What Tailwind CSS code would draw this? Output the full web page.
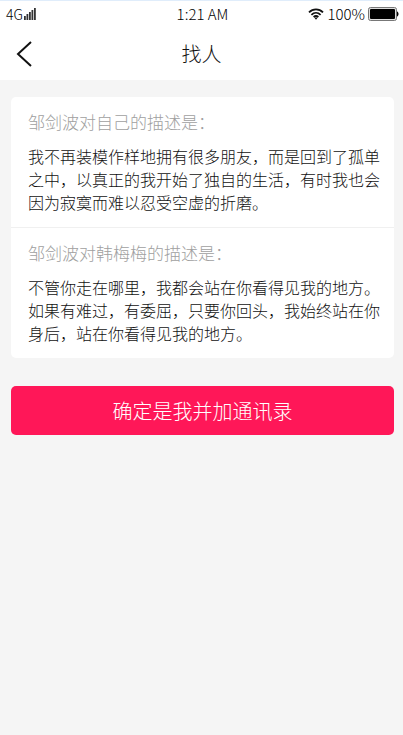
<!DOCTYPE html>
<html lang="zh-CN">
<head>
<meta charset="utf-8">
<meta name="viewport" content="width=device-width, initial-scale=1">
<title>找人</title>
<script src="https://cdn.jsdelivr.net/npm/@tailwindcss/browser@4"></script>
</head>
<body class="min-h-screen bg-[#f5f5f5] font-['Noto_Sans_CJK_SC',sans-serif] font-light text-[#111]">
<header class="border-t border-[#e0edfb] bg-white">
  <div class="grid h-[26px] grid-cols-3 items-center pr-1 pl-[6px] text-[15px] leading-6 text-black">
    <div class="flex items-center gap-px">
      <span class="text-sm">4G</span>
      <svg class="h-3 w-3" viewBox="0 0 12 12" fill="#333" aria-hidden="true"><path d="M0 8h1.8v4H0zM2.5 6h1.8v6H2.500zM5 4h1.800v8H5zM7.500 2h1.800v10H7.500zM10 0h1.800v12H10z"/></svg>
    </div>
    <time class="text-center">1:21 AM</time>
    <div class="flex items-center justify-end gap-[3px]">
      <svg class="h-3 w-4 shrink-0" viewBox="0 0 16 12" fill="none" stroke="#111" stroke-width="1.8" aria-hidden="true"><path d="M1 4.3C5 .3 11 .3 15 4.3M3.4 6.8c2.700-2.500 6.500-2.500 9.200 0M5.600 9c1.500-1.300 3.300-1.300 4.800 0"/><path d="M6.2 9.600h3.600L8 11.800z" fill="#111" stroke="none"/></svg>
      <span>100%</span>
      <svg class="h-[14px] w-[31px] shrink-0" viewBox="0 0 31 14" aria-hidden="true"><rect x=".5" y=".5" width="28" height="13" rx="2" fill="#ddd" stroke="#777"/><rect x="2" y="2" width="25" height="10" rx="1"/><path d="M29 4.500c2 .500 2 4.500 0 5z"/></svg>
    </div>
  </div>
  <div class="grid h-[53px] grid-cols-[48px_1fr_48px] items-center">
    <button type="button" aria-label="返回" class="flex h-full items-center pl-4">
      <svg class="h-[26px] w-4" viewBox="0 0 16 26" fill="none" stroke="#111" stroke-width="2" aria-hidden="true"><path d="M15 1 2 13l13 12"/></svg>
    </button>
    <h1 class="text-center text-xl font-light">找人</h1>
  </div>
</header>
<main class="pt-[17px] pr-[9px] pl-[11px]">
  <div class="divide-y divide-[#f0f0f0] rounded-[5px] bg-white">
    <section class="pt-[13px] pr-[14px] pb-[13px] pl-[17px]">
      <h2 class="mb-[11px] text-[17px] leading-6 font-light text-[#a0a0a0]">邹剑波对自己的描述是：</h2>
      <p class="text-base leading-[23px]">我不再装模作样地拥有很多朋友，而是回到了孤单之中，以真正的我开始了独自的生活，有时我也会因为寂寞而难以忍受空虚的折磨。</p>
    </section>
    <section class="pt-[13px] pr-[14px] pb-[13px] pl-[17px]">
      <h2 class="mb-[11px] text-[17px] leading-6 font-light text-[#a0a0a0]">邹剑波对韩梅梅的描述是：</h2>
      <p class="text-base leading-[23px]">不管你走在哪里，我都会站在你看得见我的地方。如果有难过，有委屈，只要你回头，我始终站在你身后，站在你看得见我的地方。</p>
    </section>
  </div>
  <button type="button" class="mt-7 h-[49px] w-full rounded-[5px] bg-[#ff1758] text-xl text-white">确定是我并加通讯录</button>
</main>
</body>
</html>
